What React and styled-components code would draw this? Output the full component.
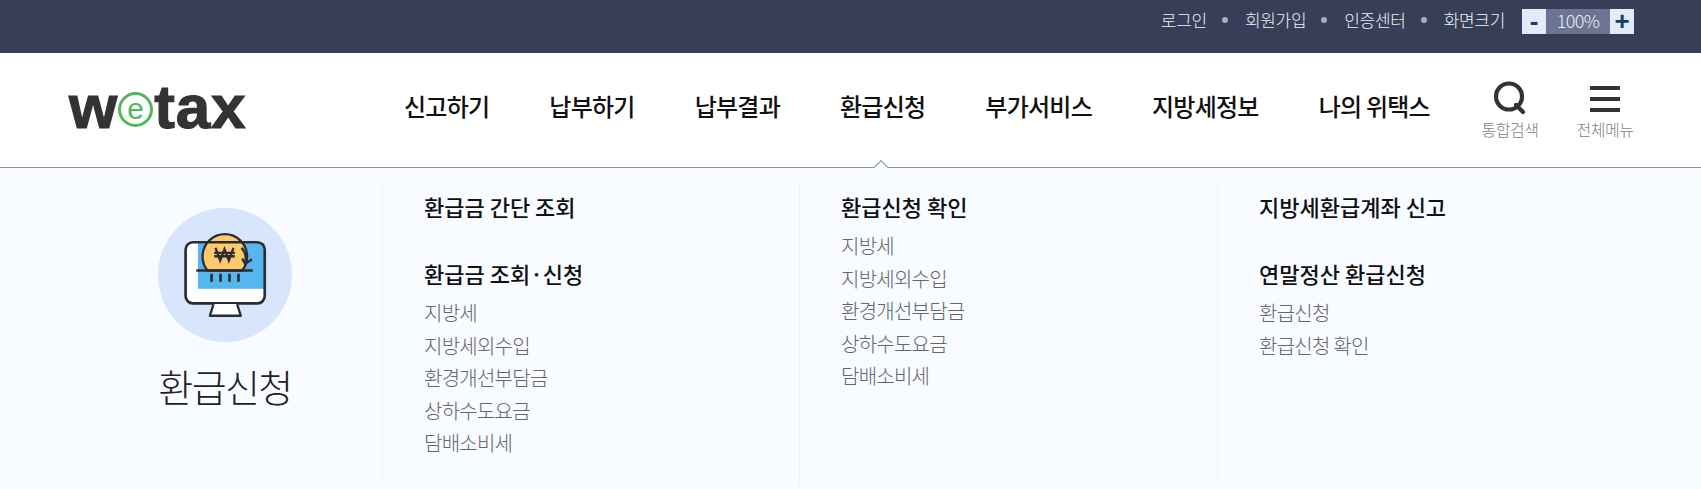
import React from "react";
import styled, { createGlobalStyle } from "styled-components";

const Global = createGlobalStyle`
  html, body { margin: 0; padding: 0; background: #f8fbff; }
  body { font-family: "Noto Sans CJK KR", "Noto Sans", sans-serif; }
  ul { list-style: none; margin: 0; padding: 0; }
  a { color: inherit; text-decoration: none; }
`;

const Page = styled.div`
  width: 1701px;
  height: 489px;
  overflow: hidden;
  background: #f8fbff;
`;

const TopBar = styled.div`
  height: 53px;
  background: #373e58;
  display: flex;
  justify-content: flex-end;
  align-items: flex-start;
  padding: 9px 67px 0 0;
  box-sizing: border-box;
`;

const UtilList = styled.ul`
  display: flex;
  align-items: center;
  height: 25px;
  margin: -2px 17px 0 0;
`;

const UtilItem = styled.li`
  display: flex;
  align-items: center;
  color: #f0f1f5;
  font-size: 17px;
  font-weight: 300;
  letter-spacing: -0.3px;
  &:not(:first-child)::before {
    content: "";
    width: 6px;
    height: 6px;
    border-radius: 50%;
    background: #a3aebf;
    margin: 0 17px 0 15px;
  }
`;

const Zoomer = styled.div`
  display: flex;
  height: 25px;
`;

const ZoomButton = styled.button`
  width: 24px;
  height: 25px;
  border: 0;
  padding: 0;
  background: #e2ebf7;
  color: #1a3a72;
  font: 700 26px/25px "Liberation Sans", sans-serif;
`;

const ZoomValue = styled.span`
  width: 64px;
  background: #6c7494;
  color: #eceef3;
  text-align: center;
  font-size: 18px;
  font-weight: 300;
  line-height: 22px;
  letter-spacing: -0.6px;
`;

const Header = styled.header`
  height: 115px;
  box-sizing: border-box;
  background: #fff;
  border-bottom: 1px solid #8b9096;
  display: flex;
  align-items: center;
  position: relative;
`;

const LogoBox = styled.a`
  width: 404px;
  padding-left: 69px;
  box-sizing: border-box;
  display: flex;
  align-items: center;
  height: 44px;
  margin-top: -7px;
`;

const LogoText = styled.span`
  font: 700 62px/44px "Liberation Sans", sans-serif;
  color: #333;
  letter-spacing: 0.9px;
  -webkit-text-stroke: 1.2px #333;
`;

const LogoE = styled.span`
  width: 35px;
  height: 35px;
  margin: 5px 1px 0 0;
  box-sizing: border-box;
  border: 3px solid #52b85a;
  border-radius: 50%;
  background: #fff;
  color: #52b85a;
  font: 400 30px/27px "Liberation Sans", sans-serif;
  text-align: center;
`;

const Nav = styled.ul`
  display: flex;
  gap: 60px;
  width: 1078px;
  margin-top: -9px;
`;

const NavItem = styled.li`
  font-size: 24px;
  line-height: 32px;
  font-weight: 500;
  letter-spacing: -0.75px;
  color: #111;
  white-space: nowrap;
`;

const Tools = styled.div`
  display: flex;
  gap: 39px;
  margin-top: -1px;
`;

const Tool = styled.a`
  display: flex;
  flex-direction: column;
  align-items: center;
  width: 56px;
  color: #7f7f7f;
  font-size: 16px;
  font-weight: 300;
  line-height: 18px;
  letter-spacing: -0.5px;
  white-space: nowrap;
`;

const ToolIcon = styled.svg`
  width: 36px;
  height: 36px;
  margin-bottom: 3px;
  display: block;
`;

const Notch = styled.span`
  position: absolute;
  left: 876px;
  bottom: -5px;
  width: 9px;
  height: 9px;
  background: #f8fbff;
  border-left: 1px solid #8b9096;
  border-top: 1px solid #8b9096;
  transform: rotate(45deg);
`;

const Panel = styled.section`
  display: grid;
  grid-template-columns: 382px 417px 418px 1fr;
  padding-top: 15px;
  height: 301px;
`;

const Lead = styled.div`
  display: flex;
  flex-direction: column;
  padding: 25px 0 0 68px;
  box-sizing: border-box;
  width: 382px;
  align-items: flex-start;
`;

const LeadCircle = styled.div`
  width: 134px;
  height: 134px;
  margin-left: 90px;
  border-radius: 50%;
  background: #d7e6fd;
`;

const LeadTitle = styled.div`
  margin: 19px 0 0 90px;
  width: 134px;
  text-align: center;
  font-size: 38px;
  line-height: 50px;
  font-weight: 300;
  letter-spacing: -1.6px;
  color: #222;
  white-space: nowrap;
`;

const Column = styled.div`
  border-left: 1px solid #eef1f4;
  padding: 8px 0 0 41px;
`;

const Heading = styled.h3`
  margin: 0 0 ${p => p.$gap ?? 0}px;
  font-size: 22px;
  line-height: 30px;
  font-weight: 500;
  letter-spacing: 0;
  color: #111;
`;

const SubList = styled.ul`
  margin-top: 9px;
`;

const SubItem = styled.li`
  font-size: 20px;
  line-height: 32.5px;
  font-weight: 300;
  letter-spacing: -0.75px;
  color: #666;
`;

const sub = ["지방세", "지방세외수입", "환경개선부담금", "상하수도요금", "담배소비세"];
const navs = ["신고하기", "납부하기", "납부결과", "환급신청", "부가서비스", "지방세정보", "나의 위택스"];

function RefundIcon() {
  const ink = "#2b2d33";
  return (
    <svg width="134" height="134" viewBox="85 40 403 403" aria-hidden="true">
      <path d="M168 165 a22 22 0 0 1 22 -22 H384 a22 22 0 0 1 22 22 V305 a22 22 0 0 1 -22 22 H190 a22 22 0 0 1 -22 -22 z" fill="#fff" />
      <rect x="205" y="146" width="200" height="137" fill="#56b7f0" />
      <path d="M234 228 A67 67 0 1 1 338 228 Z" fill="#fdcb6e" stroke={ink} strokeWidth="7" />
      <path d="M168 165 a22 22 0 0 1 22 -22 H384 a22 22 0 0 1 22 22 V305 a22 22 0 0 1 -22 22 H190 a22 22 0 0 1 -22 -22 z" fill="none" stroke={ink} strokeWidth="8" />
      <path d="M200 228 H370" stroke={ink} strokeWidth="8" />
      <path d="M246 238v24M273 238v24M300 238v24M327 238v24" stroke={ink} strokeWidth="8" />
      <path d="M252 329 L241 364 H334 L323 329" fill="#fff" stroke={ink} strokeWidth="7" strokeLinejoin="round" />
      <path d="M258 160 L272 198 L285 164 L298 198 L312 160 M254 175 H316 M254 185 H316" fill="none" stroke={ink} strokeWidth="7" />
      <path d="M336 160 Q354 178 347 206 M338 192 L347 208 L368 194" fill="none" stroke={ink} strokeWidth="7" />
    </svg>
  );
}

export default function App() {
  return (
    <Page>
      <Global />
      <TopBar>
        <UtilList>
          {["로그인", "회원가입", "인증센터", "화면크기"].map(t => <UtilItem key={t}>{t}</UtilItem>)}
        </UtilList>
        <Zoomer>
          <ZoomButton>-</ZoomButton>
          <ZoomValue>100%</ZoomValue>
          <ZoomButton>+</ZoomButton>
        </Zoomer>
      </TopBar>
      <Header>
        <LogoBox href="#">
          <LogoText>w</LogoText>
          <LogoE>e</LogoE>
          <LogoText>tax</LogoText>
        </LogoBox>
        <Nav>
          {navs.map(t => <NavItem key={t}>{t}</NavItem>)}
        </Nav>
        <Tools>
          <Tool href="#">
            <ToolIcon viewBox="0 0 36 36" aria-hidden="true">
              <circle cx="17" cy="15.5" r="13" fill="none" stroke="#333" strokeWidth="4.2" />
              <path d="M24 24 L31 31" stroke="#333" strokeWidth="4.2" strokeLinecap="round" />
            </ToolIcon>
            통합검색
          </Tool>
          <Tool href="#">
            <ToolIcon viewBox="0 0 36 36" aria-hidden="true">
              <path d="M3 7H33M3 18H33M3 29H33" stroke="#333" strokeWidth="4" />
            </ToolIcon>
            전체메뉴
          </Tool>
        </Tools>
        <Notch />
      </Header>
      <Panel>
        <Lead>
          <LeadCircle><RefundIcon /></LeadCircle>
          <LeadTitle>환급신청</LeadTitle>
        </Lead>
        <Column>
          <Heading $gap={37}>환급금 간단 조회</Heading>
          <Heading>환급금 조회·신청</Heading>
          <SubList>{sub.map(t => <SubItem key={t}>{t}</SubItem>)}</SubList>
        </Column>
        <Column>
          <Heading>환급신청 확인</Heading>
          <SubList>{sub.map(t => <SubItem key={t}>{t}</SubItem>)}</SubList>
        </Column>
        <Column>
          <Heading $gap={37}>지방세환급계좌 신고</Heading>
          <Heading>연말정산 환급신청</Heading>
          <SubList>{["환급신청", "환급신청 확인"].map(t => <SubItem key={t}>{t}</SubItem>)}</SubList>
        </Column>
      </Panel>
    </Page>
  );
}
